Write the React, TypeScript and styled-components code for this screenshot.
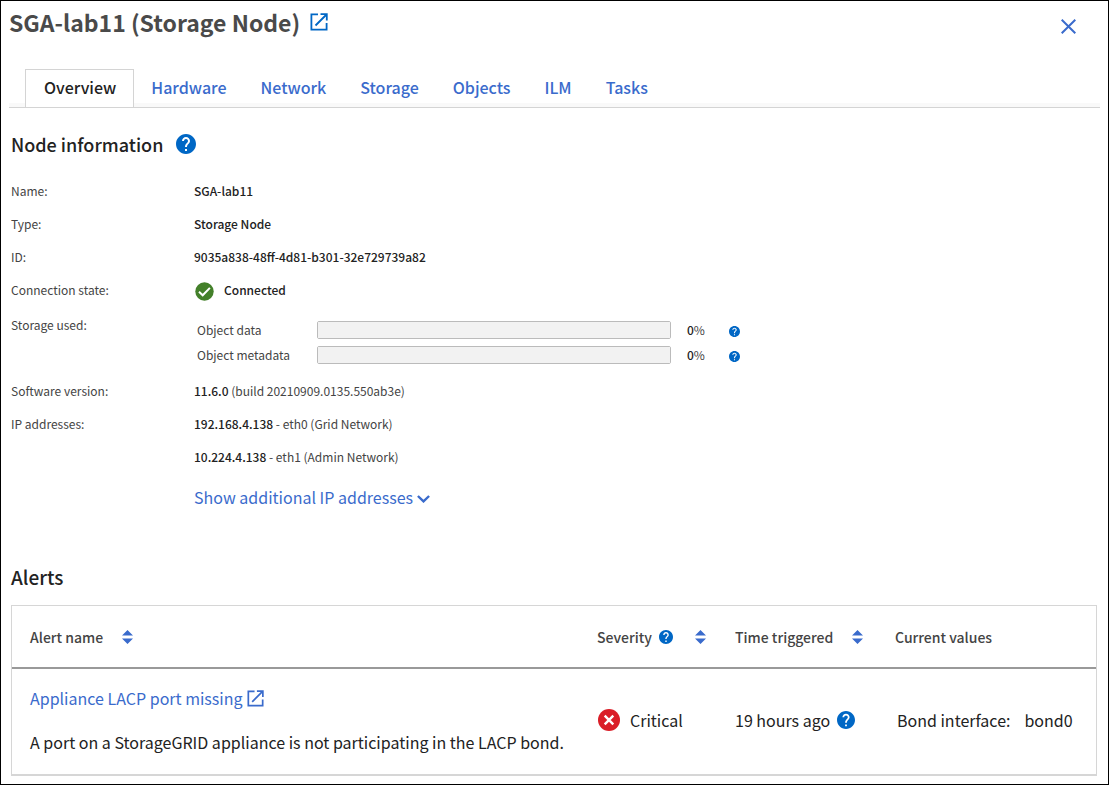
import React from "react";
import styled, { createGlobalStyle } from "styled-components";

const GlobalStyle = createGlobalStyle`
  *, *::before, *::after { box-sizing: border-box; }
  body {
    margin: 0;
    background: #fff;
    color: #222;
    font-family: "Noto Sans CJK SC", "Noto Sans", sans-serif;
    font-size: 16px;
    line-height: 24px;
  }
  h1, h2, p, dl, dd { margin: 0; }
  button { font: inherit; color: inherit; background: none; border: 0; padding: 0; cursor: pointer; }
  a { color: #3a6bcc; text-decoration: none; }
  svg { display: block; flex: none; }
`;

const Page = styled.main`
  min-height: 100vh;
  border: 1px solid #000;
  padding: 0 8px 8px;
`;

const Header = styled.header`
  display: flex;
  align-items: center;
  justify-content: space-between;
  height: 42px;
  padding-right: 24px;
`;

const TitleGroup = styled.div`
  display: flex;
  align-items: center;
  gap: 10px;
`;

const Title = styled.h1`
  font-size: 23px;
  font-weight: 700;
  line-height: 30px;
  color: #4a4a4a;
`;

const CloseButton = styled.button`
  margin-top: 8px;
`;

const TabBar = styled.nav`
  display: flex;
  margin-top: 26px;
  padding-left: 16px;
  background: linear-gradient(#fff, #fff) top / 100% 34px no-repeat, #f9f9f9;
  border-bottom: 1px solid #d4d4d4;
`;

const Tab = styled.a<{ $active?: boolean }>`
  height: 38px;
  margin-bottom: ${(p) => (p.$active ? "-1px" : "0")};
  padding: ${(p) => (p.$active ? "0 17px 0 18px" : "0 17px")};
  border: ${(p) => (p.$active ? "1px solid #d4d4d4" : "0")};
  border-top: 1px solid ${(p) => (p.$active ? "#d4d4d4" : "transparent")};
  border-bottom: 0;
  background: ${(p) => (p.$active ? "#fff" : "none")};
  color: ${(p) => (p.$active ? "#222" : "#3a6bcc")};
  font-size: 16px;
  font-weight: 500;
  line-height: 34px;
`;

const Section = styled.section<{ $gap: number }>`
  margin-top: ${(p) => p.$gap}px;
  padding: 0 3px 0 2px;
`;

const SectionTitle = styled.h2<{ $size: number }>`
  font-size: ${(p) => p.$size}px;
  font-weight: 500;
  line-height: 24px;
`;

const SectionHead = styled.div`
  display: flex;
  align-items: center;
  gap: 13px;
`;

const Details = styled.dl`
  margin-top: 18px;
  font-size: 12px;
  color: #444;
`;

const DetailRow = styled.div<{ $top?: number }>`
  display: grid;
  grid-template-columns: 183px 1fr;
  padding-top: ${(p) => p.$top ?? 0}px;
  line-height: 33px;
`;

const Strong = styled.strong`
  font-weight: 500;
  color: #222;
`;

const State = styled.dd`
  display: flex;
  align-items: center;
  gap: 10px;
  padding-left: 1px;
`;

const StateIcon = styled.span`
  padding-top: 4px;
`;

const StorageList = styled.dd`
  display: grid;
  grid-template-columns: 120px 354px 42px auto;
  align-content: start;
  align-items: center;
  justify-content: start;
  row-gap: 7px;
  padding: 13px 0 10px 3px;
  line-height: 18px;
`;

const Meter = styled.progress`
  appearance: none;
  width: 100%;
  height: 18px;
  border: 1px solid #bbb;
  border-radius: 2px;
  background: #f2f2f2;
  &::-webkit-progress-bar { background: #f2f2f2; }
  &::-webkit-progress-value { background: #0067c5; }
`;

const Percent = styled.span`
  padding-left: 16px;
`;

const MeterHelp = styled.button`
  padding: 3px 0 0 16px;
`;

const MoreButton = styled.button`
  display: flex;
  align-items: center;
  gap: 4px;
  margin-top: 12px;
  color: #3a6bcc;
  font-size: 16px;
  line-height: 24px;
`;

const MoreIcon = styled.span`
  padding-top: 4px;
`;

const AlertTable = styled.table`
  width: 100%;
  margin-top: 16px;
  table-layout: fixed;
  border-collapse: separate;
  border-spacing: 0;
  border: 1px solid #d6d6d6;
  border-bottom-width: 2px;
`;

const HeadCell = styled.th<{ $width?: number }>`
  width: ${(p) => (p.$width ? `${p.$width}px` : "auto")};
  height: 63px;
  padding: 0 0 0 18px;
  border-bottom: 2px solid #999;
  color: #444;
  font-size: 14px;
  font-weight: 500;
  text-align: left;
`;

const HeadContent = styled.div<{ $gap?: number }>`
  display: flex;
  align-items: center;
  gap: ${(p) => p.$gap ?? 19}px;
`;

const Cell = styled.td`
  height: 105px;
  padding: 0 0 3px 18px;
  white-space: nowrap;
`;

const CellContent = styled.div<{ $gap: number; $inset?: number }>`
  display: flex;
  align-items: center;
  gap: ${(p) => p.$gap}px;
  padding-left: ${(p) => p.$inset ?? 0}px;
`;

const AlertLink = styled.a`
  display: flex;
  align-items: center;
  gap: 4px;
  margin-bottom: 20px;
`;

const ExternalIcon = ({ size, color }: { size: number; color: string }) => (
  <svg width={size} height={size} viewBox="0 0 18 18" fill="none" stroke={color} strokeWidth="1.8">
    <path d="M8 1.4H1.4v15.2h15.2V10" />
    <path d="M10.5 1.2h6.3v6.3M16.5 1.5L5.5 12.5" />
  </svg>
);

const HelpIcon = ({ size }: { size: number }) => (
  <svg width={size} height={size} viewBox="2 2 20 20" fill="#0067c5">
    <path d="M12 2C6.48 2 2 6.48 2 12s4.48 10 10 10 10-4.48 10-10S17.52 2 12 2zm1 17h-2v-2h2v2zm2.07-7.75l-.9.92C13.45 12.9 13 13.5 13 15h-2v-.5c0-1.1.45-2.1 1.17-2.83l1.24-1.26c.37-.36.59-.86.59-1.41 0-1.1-.9-2-2-2s-2 .9-2 2H8c0-2.21 1.79-4 4-4s4 1.79 4 4c0 .88-.36 1.68-.93 2.25z" />
  </svg>
);

const SortIcon = () => (
  <svg width="11" height="14" viewBox="0 0 11 14" fill="#3a6bcc">
    <path d="M0 5.5L5.5 0 11 5.5zM0 8.5L5.5 14 11 8.5z" />
  </svg>
);

const CheckIcon = () => (
  <svg width="19" height="19" viewBox="0 0 19 19">
    <circle cx="9.5" cy="9.5" r="9.2" fill="#43802a" />
    <path d="M4 9.8l3.7 3.5 7.2-7.4" fill="none" stroke="#fff" strokeWidth="2" />
  </svg>
);

const CriticalIcon = () => (
  <svg width="22" height="22" viewBox="0 0 22 22">
    <circle cx="11" cy="11" r="11" fill="#da1e28" />
    <path d="M6.7 6.7l8.6 8.6M15.3 6.7l-8.6 8.6" stroke="#fff" strokeWidth="2.4" />
  </svg>
);

const CloseIcon = () => (
  <svg width="15" height="15" viewBox="0 0 15 15" stroke="#3a6bcc" strokeWidth="2">
    <path d="M.7.7l13.6 13.6M14.3.7L.7 14.3" />
  </svg>
);

const ChevronIcon = () => (
  <svg width="13" height="8" viewBox="0 0 13 8" fill="none" stroke="#3a6bcc" strokeWidth="2.4">
    <path d="M.9 1l5.6 5.4L12.1 1" />
  </svg>
);

const tabs = ["Overview", "Hardware", "Network", "Storage", "Objects", "ILM", "Tasks"];

const identity = [
  ["Name:", "SGA-lab11"],
  ["Type:", "Storage Node"],
  ["ID:", "9035a838-48ff-4d81-b301-32e729739a82"],
];

const usage = ["Object data", "Object metadata"];

export default function App() {
  return (
    <Page>
      <GlobalStyle />
      <Header>
        <TitleGroup>
          <Title>SGA-lab11 (Storage Node)</Title>
          <a href="#node" aria-label="Open node in a new window">
            <ExternalIcon size={18} color="#0067c5" />
          </a>
        </TitleGroup>
        <CloseButton type="button" aria-label="Close">
          <CloseIcon />
        </CloseButton>
      </Header>

      <TabBar>
        {tabs.map((tab, i) => (
          <Tab key={tab} href={`#${tab.toLowerCase()}`} $active={i === 0}>
            {tab}
          </Tab>
        ))}
      </TabBar>

      <Section $gap={24}>
        <SectionHead>
          <SectionTitle $size={18}>Node information</SectionTitle>
          <button type="button" aria-label="Help: node information">
            <HelpIcon size={20} />
          </button>
        </SectionHead>
        <Details>
          {identity.map(([label, value]) => (
            <DetailRow key={label}>
              <dt>{label}</dt>
              <dd><Strong>{value}</Strong></dd>
            </DetailRow>
          ))}
          <DetailRow>
            <dt>Connection state:</dt>
            <State>
              <StateIcon><CheckIcon /></StateIcon>
              <Strong>Connected</Strong>
            </State>
          </DetailRow>
          <DetailRow $top={2}>
            <dt>Storage used:</dt>
            <StorageList>
              {usage.map((label, i) => (
                <React.Fragment key={label}>
                  <label htmlFor={`usage-${i}`}>{label}</label>
                  <Meter id={`usage-${i}`} value={0} max={100} />
                  <Percent><Strong>0</Strong>%</Percent>
                  <MeterHelp type="button" aria-label={`Help: ${label}`}>
                    <HelpIcon size={11} />
                  </MeterHelp>
                </React.Fragment>
              ))}
            </StorageList>
          </DetailRow>
          <DetailRow>
            <dt>Software version:</dt>
            <dd><Strong>11.6.0</Strong> (build 20210909.0135.550ab3e)</dd>
          </DetailRow>
          <DetailRow>
            <dt>IP addresses:</dt>
            <dd>
              <p><Strong>192.168.4.138</Strong> - eth0 (Grid Network)</p>
              <p><Strong>10.224.4.138</Strong> - eth1 (Admin Network)</p>
              <MoreButton type="button">
                Show additional IP addresses
                <MoreIcon><ChevronIcon /></MoreIcon>
              </MoreButton>
            </dd>
          </DetailRow>
        </Details>
      </Section>

      <Section $gap={56}>
        <SectionTitle $size={19}>Alerts</SectionTitle>
        <AlertTable>
          <thead>
            <tr>
              <HeadCell>
                <HeadContent>
                  Alert name
                  <button type="button" aria-label="Sort by alert name"><SortIcon /></button>
                </HeadContent>
              </HeadCell>
              <HeadCell $width={138}>
                <HeadContent $gap={22}>
                  <HeadContent $gap={7}>
                    Severity
                    <button type="button" aria-label="Help: severity"><HelpIcon size={14} /></button>
                  </HeadContent>
                  <button type="button" aria-label="Sort by severity"><SortIcon /></button>
                </HeadContent>
              </HeadCell>
              <HeadCell $width={160}>
                <HeadContent>
                  Time triggered
                  <button type="button" aria-label="Sort by time triggered"><SortIcon /></button>
                </HeadContent>
              </HeadCell>
              <HeadCell $width={219}>Current values</HeadCell>
            </tr>
          </thead>
          <tbody>
            <tr>
              <Cell>
                <AlertLink href="#alert">
                  Appliance LACP port missing
                  <ExternalIcon size={17} color="#3a6bcc" />
                </AlertLink>
                <p>A port on a StorageGRID appliance is not participating in the LACP bond.</p>
              </Cell>
              <Cell>
                <CellContent $gap={10} $inset={1}>
                  <CriticalIcon />
                  Critical
                </CellContent>
              </Cell>
              <Cell>
                <CellContent $gap={7}>
                  19 hours ago
                  <button type="button" aria-label="Help: time triggered"><HelpIcon size={18} /></button>
                </CellContent>
              </Cell>
              <Cell>
                <CellContent $gap={14} $inset={2}>
                  <span>Bond interface:</span>
                  <span>bond0</span>
                </CellContent>
              </Cell>
            </tr>
          </tbody>
        </AlertTable>
      </Section>
    </Page>
  );
}
